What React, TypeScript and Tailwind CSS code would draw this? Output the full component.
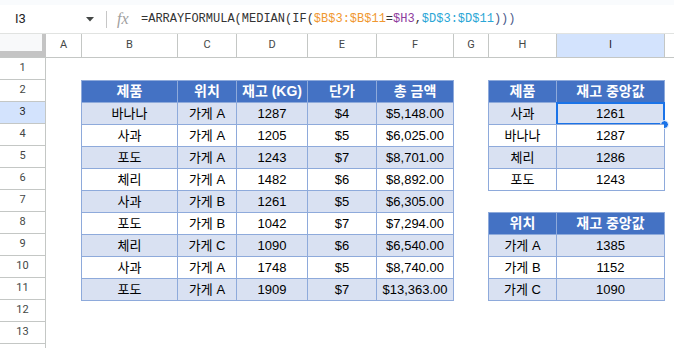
import React from "react";

const cellFont = { fontFamily: '"Liberation Sans", "Noto Sans CJK KR", sans-serif' };

type Row = string[];

const table1Header = ["제품", "위치", "재고 (KG)", "단가", "총 금액"];
const table1Rows: Row[] = [
  ["바나나", "가게 A", "1287", "$4", "$5,148.00"],
  ["사과", "가게 A", "1205", "$5", "$6,025.00"],
  ["포도", "가게 A", "1243", "$7", "$8,701.00"],
  ["체리", "가게 A", "1482", "$6", "$8,892.00"],
  ["사과", "가게 B", "1261", "$5", "$6,305.00"],
  ["포도", "가게 B", "1042", "$7", "$7,294.00"],
  ["체리", "가게 C", "1090", "$6", "$6,540.00"],
  ["사과", "가게 A", "1748", "$5", "$8,740.00"],
  ["포도", "가게 A", "1909", "$7", "$13,363.00"],
];

const table2Rows: Row[] = [
  ["사과", "1261"],
  ["바나나", "1287"],
  ["체리", "1286"],
  ["포도", "1243"],
];

const table3Rows: Row[] = [
  ["가게 A", "1385"],
  ["가게 B", "1152"],
  ["가게 C", "1090"],
];

function HeaderCell({ text }: { text: string }) {
  return (
    <div className="flex items-end justify-center border-l border-t border-[#8eaadb] bg-[#4472c4] pb-[2px] text-[14px] font-bold leading-[18px] text-white whitespace-nowrap">
      {text}
    </div>
  );
}

function BodyCell({ text, light, selected }: { text: string; light: boolean; selected?: boolean }) {
  return (
    <div
      className={
        "relative flex items-end justify-center border-l border-t border-[#8eaadb] pb-[2px] text-[13px] leading-[16px] text-black whitespace-pre " +
        (light ? "bg-[#d9e1f2]" : "bg-white")
      }
    >
      {text}
      {selected && (
        <div className="pointer-events-none absolute inset-[-1px] border-2 border-[#1a73e8]">
          <div className="absolute right-[-6px] bottom-[-6px] h-[9px] w-[9px] rounded-full border border-white bg-[#1a73e8]" />
        </div>
      )}
    </div>
  );
}

const colLetters: { l: string; w: string; hl?: boolean }[] = [
  { l: "B", w: "w-[96px]" },
  { l: "C", w: "w-[59px]" },
  { l: "D", w: "w-[71px]" },
  { l: "E", w: "w-[69px]" },
  { l: "F", w: "w-[77px]" },
  { l: "G", w: "w-[35px]" },
  { l: "H", w: "w-[68px]" },
  { l: "I", w: "w-[108px]", hl: true },
];

export default function App() {
  return (
    <div className="h-[348px] w-[674px] overflow-hidden bg-white" style={{ fontFamily: "Roboto, Arial, sans-serif" }}>
      {/* top strip */}
      <div className="h-[5px] bg-[#f9fbfd]" />
      {/* formula bar */}
      <div className="flex h-[29px] items-center border-b border-[#e1e3e1] bg-white">
        <div className="w-[85px] pl-[15px] text-[13px] text-[#1f1f1f]">I3</div>
        <svg className="ml-[1px]" width="8" height="5" viewBox="0 0 8 5">
          <path d="M0 0 L8 0 L4 4.5 Z" fill="#444746" />
        </svg>
        <div className="ml-[12px] h-[17px] w-px bg-[#c7c7c7]" />
        <div
          className="ml-[10px] w-[16px] text-[16px] italic leading-none text-[#a0a0a0]"
          style={{ fontFamily: '"Liberation Serif", serif' }}
        >
          fx
        </div>
        <div
          className="ml-[8px] whitespace-nowrap text-[12px] text-[#333]"
          style={{ fontFamily: '"Liberation Mono", monospace' }}
        >
          <span>=ARRAYFORMULA(MEDIAN(IF(</span>
          <span className="text-[#f0972f]">$B$3:$B$11</span>
          <span>=</span>
          <span className="text-[#8e3c9e]">$H3</span>
          <span>,</span>
          <span className="text-[#2aa6d6]">$D$3:$D$11</span>
          <span className="text-[#4a5a8a]">)))</span>
        </div>
      </div>
      {/* column headers */}
      <div className="flex h-[24px] border-b border-[#c4c7c5] text-[11px] text-[#444746]">
        <div className="h-full w-[46px] border-r-[4px] border-b-[6px] border-[#c4c4c4] bg-[#f8f9fa]" />
        <div className="flex w-[35px] items-center justify-center">A</div>
        {colLetters.map((c) => (
          <div
            key={c.l}
            className={
              "flex items-center justify-center border-l border-[#c4c7c5] " +
              c.w +
              (c.hl ? " bg-[#d3e3fd] text-[#1f1f1f]" : "")
            }
          >
            {c.l}
          </div>
        ))}
        <div className="flex-1 border-l border-[#c4c7c5]" />
      </div>
      {/* body */}
      <div className="flex">
        <div className="flex w-[46px] flex-col divide-y divide-[#c4c7c5] border-r border-[#c4c7c5] text-[11px] text-[#444746]">
          {Array.from({ length: 14 }, (_, i) => i + 1).map((n) => (
            <div
              key={n}
              className={
                "flex h-[22px] shrink-0 items-center justify-center " +
                (n === 3 ? "bg-[#d3e3fd] text-[#1f1f1f]" : "")
              }
            >
              {n <= 13 ? n : ""}
            </div>
          ))}
        </div>
        <div
          className="grid flex-1 grid-cols-[35px_96px_59px_71px_69px_77px_35px_68px_108px_1fr] grid-rows-[repeat(13,22px)]"
          style={cellFont}
        >
          {/* Table 1 */}
          <div className="col-span-5 col-start-2 row-span-10 row-start-2 grid h-[221px] w-[373px] auto-rows-[22px] grid-cols-[96px_59px_71px_69px_77px] border-r border-b border-[#8eaadb]">
            {table1Header.map((h) => (
              <HeaderCell key={h} text={h} />
            ))}
            {table1Rows.map((r, ri) =>
              r.map((v, ci) => <BodyCell key={ri + "-" + ci} text={v} light={ri % 2 === 0} />)
            )}
          </div>
          {/* Table 2 */}
          <div className="col-span-2 col-start-8 row-span-5 row-start-2 grid h-[111px] w-[177px] auto-rows-[22px] grid-cols-[68px_108px] border-r border-b border-[#8eaadb]">
            <HeaderCell text="제품" />
            <HeaderCell text="재고 중앙값" />
            {table2Rows.map((r, ri) =>
              r.map((v, ci) => (
                <BodyCell key={ri + "-" + ci} text={v} light={ri % 2 === 0} selected={ri === 0 && ci === 1} />
              ))
            )}
          </div>
          {/* Table 3 */}
          <div className="col-span-2 col-start-8 row-span-4 row-start-8 grid h-[89px] w-[177px] auto-rows-[22px] grid-cols-[68px_108px] border-r border-b border-[#8eaadb]">
            <HeaderCell text="위치" />
            <HeaderCell text="재고 중앙값" />
            {table3Rows.map((r, ri) =>
              r.map((v, ci) => <BodyCell key={ri + "-" + ci} text={v} light={ri % 2 === 0} />)
            )}
          </div>
        </div>
      </div>
    </div>
  );
}
